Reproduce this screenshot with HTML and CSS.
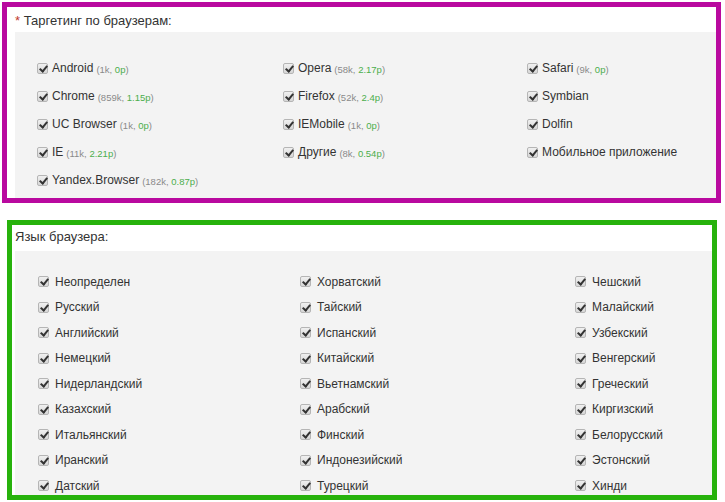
FILE: index.html
```html
<!DOCTYPE html>
<html lang="ru">
<head>
    <meta charset="UTF-8">
    <title>Таргетинг</title>
    <link rel="stylesheet" href="styles.css">
</head>
<body>
    <div class="box box-browsers">
        <div class="box-title"><span class="req">*</span> Таргетинг по браузерам:</div>
        <div class="panel">
            <div class="grid grid-browsers">
                <label class="item"><span class="cb"></span>Android <span class="stat">(1k, <em>0р</em>)</span></label>
                <label class="item"><span class="cb"></span>Opera <span class="stat">(58k, <em>2.17р</em>)</span></label>
                <label class="item"><span class="cb"></span>Safari <span class="stat">(9k, <em>0р</em>)</span></label>
                <label class="item"><span class="cb"></span>Chrome <span class="stat">(859k, <em>1.15р</em>)</span></label>
                <label class="item"><span class="cb"></span>Firefox <span class="stat">(52k, <em>2.4р</em>)</span></label>
                <label class="item"><span class="cb"></span>Symbian</label>
                <label class="item"><span class="cb"></span>UC Browser <span class="stat">(1k, <em>0р</em>)</span></label>
                <label class="item"><span class="cb"></span>IEMobile <span class="stat">(1k, <em>0р</em>)</span></label>
                <label class="item"><span class="cb"></span>Dolfin</label>
                <label class="item"><span class="cb"></span>IE <span class="stat">(11k, <em>2.21р</em>)</span></label>
                <label class="item"><span class="cb"></span>Другие <span class="stat">(8k, <em>0.54р</em>)</span></label>
                <label class="item"><span class="cb"></span>Мобильное приложение</label>
                <label class="item"><span class="cb"></span>Yandex.Browser <span class="stat">(182k, <em>0.87р</em>)</span></label>
            </div>
        </div>
    </div>

    <div class="box box-lang">
        <div class="box-title">Язык браузера:</div>
        <div class="panel">
            <div class="grid grid-lang">
                <label class="item"><span class="cb"></span>Неопределен</label>
                <label class="item"><span class="cb"></span>Хорватский</label>
                <label class="item"><span class="cb"></span>Чешский</label>
                <label class="item"><span class="cb"></span>Русский</label>
                <label class="item"><span class="cb"></span>Тайский</label>
                <label class="item"><span class="cb"></span>Малайский</label>
                <label class="item"><span class="cb"></span>Английский</label>
                <label class="item"><span class="cb"></span>Испанский</label>
                <label class="item"><span class="cb"></span>Узбекский</label>
                <label class="item"><span class="cb"></span>Немецкий</label>
                <label class="item"><span class="cb"></span>Китайский</label>
                <label class="item"><span class="cb"></span>Венгерский</label>
                <label class="item"><span class="cb"></span>Нидерландский</label>
                <label class="item"><span class="cb"></span>Вьетнамский</label>
                <label class="item"><span class="cb"></span>Греческий</label>
                <label class="item"><span class="cb"></span>Казахский</label>
                <label class="item"><span class="cb"></span>Арабский</label>
                <label class="item"><span class="cb"></span>Киргизский</label>
                <label class="item"><span class="cb"></span>Итальянский</label>
                <label class="item"><span class="cb"></span>Финский</label>
                <label class="item"><span class="cb"></span>Белорусский</label>
                <label class="item"><span class="cb"></span>Иранский</label>
                <label class="item"><span class="cb"></span>Индонезийский</label>
                <label class="item"><span class="cb"></span>Эстонский</label>
                <label class="item"><span class="cb"></span>Датский</label>
                <label class="item"><span class="cb"></span>Турецкий</label>
                <label class="item"><span class="cb"></span>Хинди</label>
            </div>
        </div>
    </div>
</body>
</html>
```

FILE: styles.css
```css
* {
    box-sizing: border-box;
    margin: 0;
    padding: 0;
}

body {
    font-family: "Liberation Sans", Arial, sans-serif;
    color: #333;
    background: #fff;
    width: 725px;
    height: 502px;
    overflow: hidden;
}

.box {
    display: flex;
    flex-direction: column;
    background: #fff;
    border: 5px solid;
    overflow: hidden;
}

.box-browsers {
    border-color: #b9099f;
    margin: 2px 0 0 2px;
    width: 719px;
    height: 201px;
}

.box-lang {
    border-color: #27b20c;
    margin: 17px 0 0 7px;
    width: 710px;
    height: 280px;
}

.box-title {
    flex: none;
    font-size: 13px;
    padding: 6px 0 0 8px;
    height: 25px;
    color: #333;
}

.box-lang .box-title {
    padding: 4px 0 0 3px;
    height: 26px;
}

.req {
    color: #c0392b;
}

.panel {
    flex: 1;
    min-height: 0;
    background: #f3f3f3;
    margin-left: 8px;
}

.box-lang .panel {
    margin-left: 3px;
}

.grid {
    display: grid;
}

.grid-browsers {
    grid-template-columns: 246px 244px 1fr;
    grid-auto-rows: 28px;
    padding: 22px 0 0 22px;
}

.grid-lang {
    grid-template-columns: 262px 275px 1fr;
    grid-auto-rows: 25.5px;
    padding: 18px 0 0 23px;
}

.item {
    display: flex;
    align-items: center;
    font-size: 12px;
    white-space: nowrap;
}

.cb {
    position: relative;
    width: 11px;
    height: 11px;
    margin-right: 4px;
    border: 1px solid #b5b5b5;
    border-radius: 2px;
    background: linear-gradient(#f0f0f0, #d6d6d6);
    flex: none;
}

.grid-lang .cb {
    margin-right: 6px;
}

.cb::after {
    content: "";
    position: absolute;
    left: 3px;
    top: 0px;
    width: 3px;
    height: 6px;
    border-right: 2px solid #333;
    border-bottom: 2px solid #333;
    transform: rotate(40deg);
}

.stat {
    font-size: 9.5px;
    color: #8a8a8a;
    margin-left: 3px;
    padding-top: 2px;
}

.stat em {
    font-style: normal;
    color: #4cae4c;
}
```
